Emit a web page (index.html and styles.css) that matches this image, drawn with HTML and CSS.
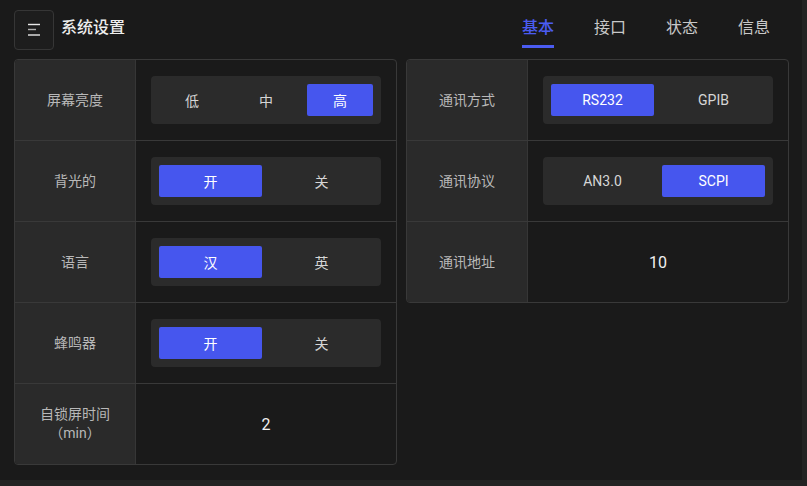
FILE: index.html
```html
<!DOCTYPE html>
<html lang="zh-CN">
  <head>
    <meta charset="UTF-8" />
    <meta name="viewport" content="width=device-width, initial-scale=1.0" />
    <title>系统设置</title>
    <link rel="stylesheet" href="styles.css">
  </head>
  <body>
    <div class="app">
      <div class="header">
        <button class="menu-btn">
          <svg width="14" height="14" viewBox="0 0 14 14">
            <line x1="1" y1="1.5" x2="13" y2="1.5" stroke="#e8e8e8" stroke-width="1.4" />
            <line x1="1" y1="6.5" x2="9" y2="6.5" stroke="#b0b0b0" stroke-width="1.4" />
            <line x1="1" y1="12" x2="13" y2="12" stroke="#e8e8e8" stroke-width="1.4" />
          </svg>
        </button>
        <span class="title">系统设置</span>
        <div class="tabs">
          <a href="#" class="tab active">基本</a>
          <a href="#" class="tab">接口</a>
          <a href="#" class="tab">状态</a>
          <a href="#" class="tab">信息</a>
        </div>
      </div>
      <div class="content">
        <div class="panel">
          <div class="row">
            <div class="label">屏幕亮度</div>
            <div class="value">
              <div class="seg">
                <span class="opt">低</span>
                <span class="opt">中</span>
                <span class="opt active">高</span>
              </div>
            </div>
          </div>
          <div class="row">
            <div class="label">背光的</div>
            <div class="value">
              <div class="seg">
                <span class="opt active">开</span>
                <span class="opt">关</span>
              </div>
            </div>
          </div>
          <div class="row">
            <div class="label">语言</div>
            <div class="value">
              <div class="seg">
                <span class="opt active">汉</span>
                <span class="opt">英</span>
              </div>
            </div>
          </div>
          <div class="row">
            <div class="label">蜂鸣器</div>
            <div class="value">
              <div class="seg">
                <span class="opt active">开</span>
                <span class="opt">关</span>
              </div>
            </div>
          </div>
          <div class="row">
            <div class="label">自锁屏时间<br />（min）</div>
            <div class="value num">2</div>
          </div>
        </div>
        <div class="panel">
          <div class="row">
            <div class="label">通讯方式</div>
            <div class="value">
              <div class="seg">
                <span class="opt active">RS232</span>
                <span class="opt">GPIB</span>
              </div>
            </div>
          </div>
          <div class="row">
            <div class="label">通讯协议</div>
            <div class="value">
              <div class="seg">
                <span class="opt">AN3.0</span>
                <span class="opt active">SCPI</span>
              </div>
            </div>
          </div>
          <div class="row">
            <div class="label">通讯地址</div>
            <div class="value num">10</div>
          </div>
        </div>
      </div>
    </div>
  </body>
</html>
```

FILE: styles.css
```css
body {
  margin: 0;
  background-color: #232323;
  font-family: Roboto, "Noto Sans CJK SC", sans-serif;
  color: #ddd;
}
.app {
  width: 802px;
  height: 480px;
  box-sizing: border-box;
  padding: 10px 13px 0 14px;
  background-color: #1a1a1a;
}
.header {
  display: flex;
  align-items: center;
  height: 40px;
}
.menu-btn {
  width: 40px;
  height: 40px;
  display: flex;
  align-items: center;
  justify-content: center;
  background-color: #1d1d1d;
  border: 1px solid #363636;
  border-radius: 4px;
  padding: 0;
}
.title {
  margin-left: 7px;
  padding-bottom: 4px;
  font-size: 16px;
  line-height: 20px;
  font-weight: 500;
  color: #eee;
}
.tabs {
  margin-left: auto;
  margin-right: 19px;
  display: flex;
  gap: 40px;
}
.tab {
  position: relative;
  font-size: 16px;
  line-height: 20px;
  color: #c8c8c8;
  text-decoration: none;
  padding-bottom: 4px;
}
.tab.active {
  color: #4b5cf2;
  font-weight: 500;
}
.tab.active::after {
  content: "";
  position: absolute;
  left: 0;
  right: 0;
  bottom: -6px;
  height: 3px;
  background-color: #4b5cf2;
}
.content {
  display: grid;
  grid-template-columns: 383px 383px;
  gap: 9px;
  align-items: start;
  margin-top: 9px;
}
.panel {
  border: 1px solid #393939;
  border-radius: 4px;
  overflow: hidden;
}
.row {
  display: grid;
  grid-template-columns: 121px 1fr;
  height: 80px;
  border-bottom: 1px solid #393939;
}
.row:last-child {
  border-bottom: none;
}
.label {
  display: flex;
  align-items: center;
  justify-content: center;
  text-align: center;
  background-color: #2a2a2a;
  border-right: 1px solid #363636;
  font-size: 14px;
  line-height: 19px;
  color: #b8b8b8;
}
.value {
  display: flex;
  align-items: center;
  padding: 0 15px 0 15px;
}
.value.num {
  justify-content: center;
  padding: 0;
  font-size: 16px;
  color: #f0f0f0;
}
.seg {
  display: flex;
  gap: 8px;
  width: 100%;
  padding: 8px;
  box-sizing: border-box;
  background-color: #2b2b2b;
  border-radius: 4px;
}
.opt {
  flex: 1;
  height: 32px;
  display: flex;
  align-items: center;
  justify-content: center;
  border-radius: 2px;
  font-size: 14px;
  color: #d6d6d6;
}
.opt.active {
  background-color: #4656ee;
  color: #fff;
}
```
